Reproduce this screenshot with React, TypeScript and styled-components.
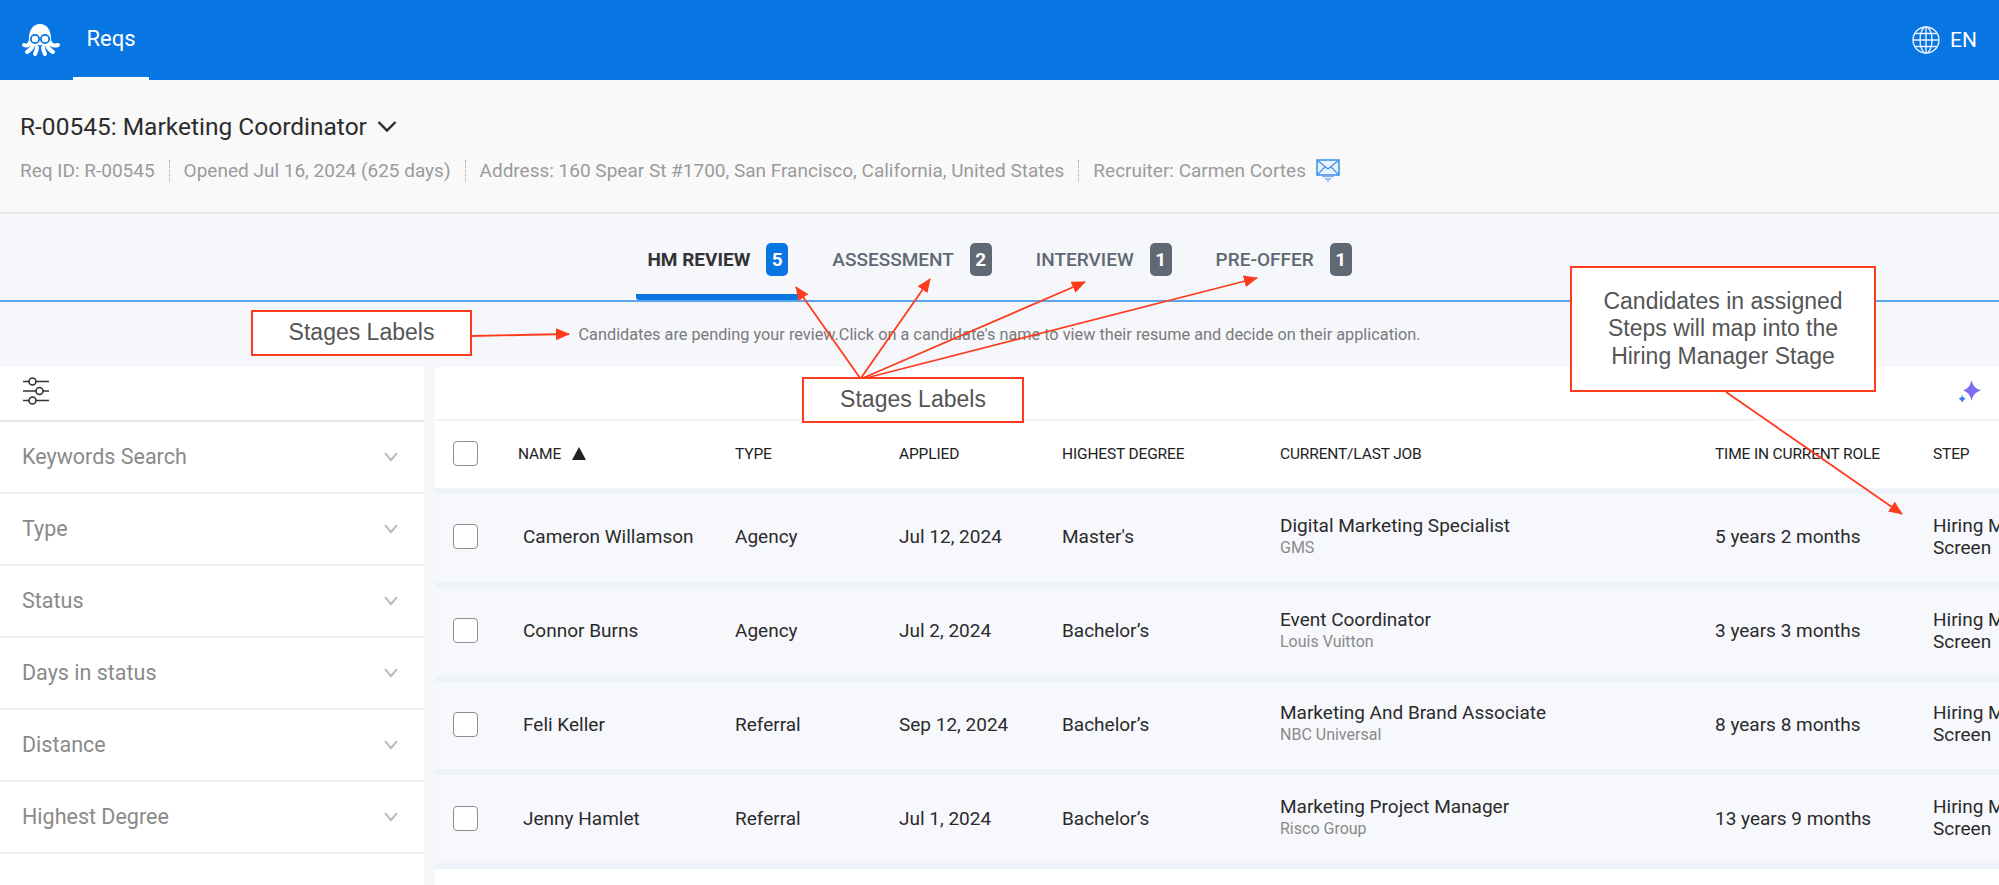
import React from 'react';
import styled, { createGlobalStyle } from 'styled-components';

const GlobalStyle = createGlobalStyle`
  html, body {
    margin: 0;
    padding: 0;
    overflow: hidden;
    background: #f5f7fb;
    font-family: Roboto, "Liberation Sans", sans-serif;
  }
  * { box-sizing: border-box; }
`;

const tabs = [
  { label: 'HM REVIEW', count: 5, active: true },
  { label: 'ASSESSMENT', count: 2, active: false },
  { label: 'INTERVIEW', count: 1, active: false },
  { label: 'PRE-OFFER', count: 1, active: false },
];

const filters = ['Keywords Search', 'Type', 'Status', 'Days in status', 'Distance', 'Highest Degree'];

const candidates = [
  { name: 'Cameron Willamson', type: 'Agency', applied: 'Jul 12, 2024', degree: "Master's", job: 'Digital Marketing Specialist', company: 'GMS', time: '5 years 2 months' },
  { name: 'Connor Burns', type: 'Agency', applied: 'Jul 2, 2024', degree: 'Bachelor’s', job: 'Event Coordinator', company: 'Louis Vuitton', time: '3 years 3 months' },
  { name: 'Feli Keller', type: 'Referral', applied: 'Sep 12, 2024', degree: 'Bachelor’s', job: 'Marketing And Brand Associate', company: 'NBC Universal', time: '8 years 8 months' },
  { name: 'Jenny Hamlet', type: 'Referral', applied: 'Jul 1, 2024', degree: 'Bachelor’s', job: 'Marketing Project Manager', company: 'Risco Group', time: '13 years 9 months' },
];

const Page = styled.div`
  position: relative;
  width: 1999px;
  height: 885px;
  overflow: hidden;
  background: #f5f7fb;
`;

const TopBar = styled.header`
  height: 80px;
  background: #0775e2;
  display: flex;
  align-items: stretch;
  padding: 0 22px 0 21px;
  color: #fff;
`;

const Logo = styled.svg`
  width: 40px;
  height: 34px;
  align-self: center;
`;

const NavTab = styled.div`
  width: 76px;
  margin-left: 12px;
  display: flex;
  align-items: center;
  justify-content: center;
  font-size: 22px;
  border-bottom: 3px solid #fff;
`;

const Lang = styled.div`
  margin-left: auto;
  display: flex;
  align-items: center;
  gap: 10px;
  font-size: 21px;
`;

const ReqHeader = styled.section`
  height: 134px;
  background: #f9f9fa;
  border-bottom: 2px solid #e9e9ea;
  padding: 32px 20px 0;
`;

const TitleRow = styled.div`
  display: flex;
  align-items: center;
  gap: 10px;
  height: 28px;
  font-size: 24.5px;
  color: #2c2c2c;
`;

const MetaRow = styled.div`
  display: flex;
  align-items: center;
  margin-top: 19px;
  font-size: 19px;
  color: #9b9b9b;
`;

const MetaItem = styled.span`
  display: flex;
  align-items: center;
  height: 22px;
  & + & {
    margin-left: 14px;
    padding-left: 14px;
    border-left: 1px dotted #a5a5a5;
  }
`;

const MailIcon = styled.svg`
  width: 24px;
  height: 23px;
  margin-left: 10px;
`;

const TabBar = styled.nav`
  height: 88px;
  border-bottom: 2px solid #5ba5ee;
  display: flex;
  justify-content: center;
  gap: 22px;
  padding-top: 29px;
`;

const StageTab = styled.div<{ $active: boolean }>`
  height: 57px;
  padding: 0 11px;
  display: flex;
  align-items: flex-start;
  gap: 16px;
  font-size: 19px;
  font-weight: ${({ $active }) => ($active ? 700 : 500)};
  line-height: 33px;
  color: ${({ $active }) => ($active ? '#333' : '#5f6873')};
  border-bottom: 6px solid ${({ $active }) => ($active ? '#0775e2' : 'transparent')};
  border-radius: 0 0 3px 3px;
`;

const CountBadge = styled.span<{ $active: boolean }>`
  width: 22px;
  height: 33px;
  border-radius: 5px;
  display: flex;
  align-items: center;
  justify-content: center;
  font-size: 19px;
  font-weight: 700;
  color: #fff;
  background: ${({ $active }) => ($active ? '#0775e2' : '#5f6873')};
`;

const StageHint = styled.p`
  margin: 0;
  height: 65px;
  display: flex;
  align-items: center;
  justify-content: center;
  font-size: 16.3px;
  color: #7a7a7a;
`;

const Body = styled.div`
  display: flex;
  gap: 11px;
  height: 518px;
`;

const Sidebar = styled.aside`
  width: 424px;
  background: #fff;
`;

const SideTools = styled.div`
  height: 55px;
  padding: 10px 0 0 22px;
  border-bottom: 2px solid #e6e6e6;
`;

const FilterRow = styled.div`
  height: 72px;
  display: flex;
  align-items: center;
  justify-content: space-between;
  padding: 0 26px 1px 22px;
  border-bottom: 2px solid #f0f0f0;
  font-size: 21.5px;
  color: #8a8a8a;
`;

const TablePanel = styled.main`
  flex: 1;
  min-width: 0;
  background: #fff;
`;

const TableTools = styled.div`
  height: 54px;
  display: flex;
  justify-content: flex-end;
  padding: 12px 18px 0 0;
  border-bottom: 2px solid #f4f4f4;
`;

const columns = '83px 217px 164px 163px 218px 435px 218px 66px';

const HeadRow = styled.div`
  height: 73px;
  padding-bottom: 2px;
  display: grid;
  grid-template-columns: ${columns};
  align-items: center;
  border-bottom: 6px solid #eff3f9;
  font-size: 15.5px;
  letter-spacing: -0.15px;
  color: #222;
`;

const DataRow = styled.div`
  height: 93.75px;
  padding-bottom: 2px;
  display: grid;
  grid-template-columns: ${columns};
  align-items: center;
  background: #f6f8fc;
  border-bottom: 6px solid #eef3f9;
  font-size: 19px;
  color: #2b2b2b;
`;

const Check = styled.span`
  display: block;
  width: 25px;
  height: 25px;
  margin-left: 18px;
  background: #fff;
  border: 1.5px solid #8d8d8d;
  border-radius: 4px;
`;

const NameHead = styled.span`
  display: flex;
  align-items: center;
  gap: 11px;
`;

const SortMark = styled.i`
  width: 0;
  height: 0;
  border-left: 7.5px solid transparent;
  border-right: 7.5px solid transparent;
  border-bottom: 13px solid #222;
`;

const NameCell = styled.span`
  padding-left: 5px;
  white-space: nowrap;
`;

const JobTitle = styled.div`
  line-height: 22px;
`;

const JobCompany = styled.div`
  line-height: 22px;
  font-size: 16px;
  color: #8a8a8a;
`;

const StepCell = styled.div`
  width: 175px;
  line-height: 22px;
`;

const NoteBox = styled.div<{ $left: number; $top: number; $width: number; $height: number }>`
  position: absolute;
  left: ${({ $left }) => $left}px;
  top: ${({ $top }) => $top}px;
  width: ${({ $width }) => $width}px;
  height: ${({ $height }) => $height}px;
  display: flex;
  align-items: center;
  justify-content: center;
  text-align: center;
  background: #fff;
  border: 2px solid #ff3b1d;
  font-family: "Liberation Sans", Arial, sans-serif;
  font-size: 23px;
  line-height: 27.5px;
  color: #555;
`;

const ArrowLayer = styled.svg`
  position: absolute;
  left: 0;
  top: 0;
  width: 1999px;
  height: 885px;
  pointer-events: none;
`;

const Chevron = () => (
  <svg width="14" height="10" viewBox="0 0 14 10" fill="none">
    <path d="M1 1l6 7 6-7" stroke="#b3b3b3" strokeWidth="1.8" />
  </svg>
);

const arrows = [
  [472, 336, 569, 334],
  [860, 378, 796, 287],
  [861, 378, 930, 279],
  [863, 378, 1085, 282],
  [866, 378, 1257, 278],
  [1726, 392, 1902, 514],
];

export default function App() {
  return (
    <Page>
      <GlobalStyle />
      <TopBar>
        <Logo viewBox="0 0 40 34">
          <path d="M8 20C7 7 12 1 19 1s12 6 11 19c0 4-22 4-22 0z" fill="#fff" />
          <g stroke="#fff" strokeWidth="4" strokeLinecap="round" fill="none">
            <path d="M9 19c-1 4-4 4-6 3" />
            <path d="M29 19c1 4 5 4 8 3" />
            <path d="M12 22c-1 4-3 5-6 7" />
            <path d="M26 22c1 4 3 5 6 7" />
            <path d="M16 24c0 3-1 5-2 7" />
            <path d="M22 24c0 3 1 5 2 7" />
          </g>
          <circle cx="14" cy="16" r="4.2" fill="#fff" stroke="#0775e2" strokeWidth="1.8" />
          <circle cx="24" cy="16" r="4.2" fill="#fff" stroke="#0775e2" strokeWidth="1.8" />
          <path d="M17 22c1 1.6 3 1.6 4 0" stroke="#0775e2" strokeWidth="1.4" fill="none" />
        </Logo>
        <NavTab>Reqs</NavTab>
        <Lang>
          <svg width="28" height="28" viewBox="0 0 28 28" fill="none" stroke="#e4f0fc" strokeWidth="1.4">
            <circle cx="14" cy="14" r="13" />
            <ellipse cx="14" cy="14" rx="6" ry="13" />
            <path d="M14 1v26M1 14h26M3 7.500h22M3 20.500h22" />
          </svg>
          EN
        </Lang>
      </TopBar>

      <ReqHeader>
        <TitleRow>
          R-00545: Marketing Coordinator
          <svg width="20" height="13" viewBox="0 0 20 13" fill="none">
            <path d="M1.500 2l8.500 8.500L18.500 2" stroke="#2c2c2c" strokeWidth="2.4" />
          </svg>
        </TitleRow>
        <MetaRow>
          <MetaItem>Req ID: R-00545</MetaItem>
          <MetaItem>Opened Jul 16, 2024 (625 days)</MetaItem>
          <MetaItem>Address: 160 Spear St #1700, San Francisco, California, United States</MetaItem>
          <MetaItem>Recruiter: Carmen Cortes</MetaItem>
          <MailIcon viewBox="0 0 24 23" fill="none">
            <path d="M1 1h22v15H1z" fill="#eaf3fd" stroke="#3b8de8" strokeWidth="1.5" />
            <path d="M1 1l11 9 11-9M1 16l8-8M23 16l-8-8" stroke="#3b8de8" strokeWidth="1.2" />
            <path d="M6 17.500h12M9 20h6M11 22h2" stroke="#7fb6f0" strokeWidth="1.6" />
          </MailIcon>
        </MetaRow>
      </ReqHeader>

      <TabBar>
        {tabs.map((tab) => (
          <StageTab key={tab.label} $active={tab.active}>
            {tab.label}
            <CountBadge $active={tab.active}>{tab.count}</CountBadge>
          </StageTab>
        ))}
      </TabBar>

      <StageHint>Candidates are pending your review.Click on a candidate's name to view their resume and decide on their application.</StageHint>

      <Body>
        <Sidebar>
          <SideTools>
            <svg width="28" height="28" viewBox="0 0 28 28" fill="none" stroke="#333" strokeWidth="1.6">
              <path d="M1 4.500h6M14 4.500h13M1 14h13M21 14h6M1 23.500h6M14 23.500h13" />
              <circle cx="10.500" cy="4.500" r="3.500" />
              <circle cx="17.500" cy="14" r="3.500" />
              <circle cx="10.500" cy="23.500" r="3.500" />
            </svg>
          </SideTools>
          {filters.map((label) => (
            <FilterRow key={label}>
              {label}
              <Chevron />
            </FilterRow>
          ))}
        </Sidebar>

        <TablePanel>
          <TableTools>
            <svg width="23" height="25" viewBox="0 0 22 24">
              <path d="M13 1c1 5 3 8 9 10-6 2-8 5-9 10-1-5-3-8-8-10 5-2 7-5 8-10z" fill="#7b6cf0" />
              <path d="M4 15c.5 2 1.300 3 3.500 4-2.200 1-3 2-3.500 4-.5-2-1.500-3-3.500-4 2-1 3-2 3.500-4z" fill="#3f7ee8" />
            </svg>
          </TableTools>
          <HeadRow>
            <Check />
            <NameHead>
              NAME
              <SortMark />
            </NameHead>
            <span>TYPE</span>
            <span>APPLIED</span>
            <span>HIGHEST DEGREE</span>
            <span>CURRENT/LAST JOB</span>
            <span>TIME IN CURRENT ROLE</span>
            <span>STEP</span>
          </HeadRow>
          {candidates.map((c) => (
            <DataRow key={c.name}>
              <Check />
              <NameCell>{c.name}</NameCell>
              <span>{c.type}</span>
              <span>{c.applied}</span>
              <span>{c.degree}</span>
              <div>
                <JobTitle>{c.job}</JobTitle>
                <JobCompany>{c.company}</JobCompany>
              </div>
              <span>{c.time}</span>
              <StepCell>Hiring Manager Screen</StepCell>
            </DataRow>
          ))}
        </TablePanel>
      </Body>

      <NoteBox $left={251} $top={310} $width={221} $height={46}>Stages Labels</NoteBox>
      <NoteBox $left={802} $top={377} $width={222} $height={46}>Stages Labels</NoteBox>
      <NoteBox $left={1570} $top={266} $width={306} $height={126}>
        Candidates in assigned
        <br />
        Steps will map into the
        <br />
        Hiring Manager Stage
      </NoteBox>

      <ArrowLayer viewBox="0 0 1999 885">
        <defs>
          <marker id="head" markerUnits="userSpaceOnUse" markerWidth="14" markerHeight="12" refX="13" refY="6" orient="auto">
            <path d="M0 0l14 6-14 6z" fill="#ff3b1d" />
          </marker>
        </defs>
        {arrows.map(([x1, y1, x2, y2]) => (
          <line key={`${x2}-${y2}`} x1={x1} y1={y1} x2={x2} y2={y2} stroke="#ff3b1d" strokeWidth="1.8" markerEnd="url(#head)" />
        ))}
      </ArrowLayer>
    </Page>
  );
}
